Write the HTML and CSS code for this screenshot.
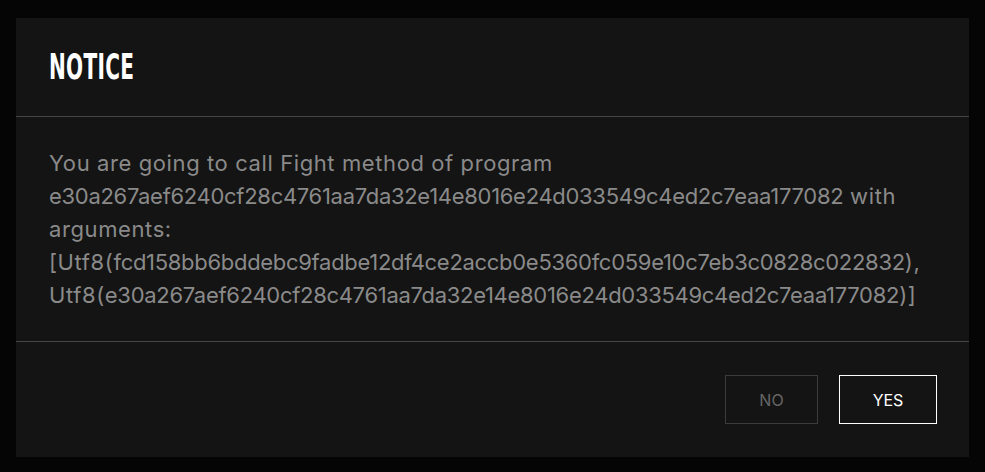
FILE: index.html
```html
<!DOCTYPE html>
<html>
<head>
<meta charset="utf-8">
<link rel="stylesheet" href="styles.css">
</head>
<body>
<div class="page">
  <div class="dialog">
    <div class="header"><h1 class="title">NOTICE</h1></div>
    <div class="content">You are going to call Fight method of program <span class="hash">e30a267aef6240cf28c4761aa7da32e14e8016e24d033549c4ed2c7eaa177082</span> with arguments: [Utf8(<span class="hash">fcd158bb6bddebc9fadbe12df4ce2accb0e5360fc059e10c7eb3c0828c022832</span>), Utf8(<span class="hash">e30a267aef6240cf28c4761aa7da32e14e8016e24d033549c4ed2c7eaa177082</span>)]</div>
    <div class="footer">
      <button class="btn btn-no">NO</button>
      <button class="btn btn-yes">YES</button>
    </div>
  </div>
</div>
</body>
</html>
```
FILE: styles.css
```css
html, body {
  margin: 0;
  padding: 0;
  background: #050505;
}
.page {
  width: 985px;
  height: 472px;
  padding: 18px 16px 15px 16px;
  box-sizing: border-box;
}
.dialog {
  background: #141414;
  height: 439px;
  display: flex;
  flex-direction: column;
  font-family: Inter, "Noto Sans", sans-serif;
}
.header {
  height: 98px;
  border-bottom: 1px solid #454545;
  display: flex;
  align-items: center;
  padding-left: 33px;
}
.title {
  margin: 0;
  font-family: "Liberation Sans Narrow", "DejaVu Sans Condensed", sans-serif;
  font-weight: 700;
  font-size: 36px;
  line-height: 1;
  color: #ffffff;
  display: inline-block;
  transform: scaleX(0.62);
  transform-origin: left center;
  letter-spacing: 0.5px;
}
.content {
  height: 225px;
  box-sizing: border-box;
  padding: 30px 33px 0 33px;
  border-bottom: 1px solid #454545;
  font-size: 22px;
  letter-spacing: 0.6px;
  line-height: 33px;
  color: #8a8a8a;
}
.hash {
  letter-spacing: -0.3px;
}
.footer {
  flex: 1;
  display: flex;
  justify-content: flex-end;
  align-items: flex-start;
  padding: 33px 32px 0 0;
  gap: 21px;
}
.btn {
  height: 49px;
  background: transparent;
  font-family: Inter, "Noto Sans", sans-serif;
  font-size: 16px;
  cursor: pointer;
  padding: 0;
}
.btn-no {
  width: 93px;
  border: 1px solid #3c3c3c;
  color: #666666;
}
.btn-yes {
  width: 98px;
  border: 1px solid #ffffff;
  color: #ffffff;
}
```
